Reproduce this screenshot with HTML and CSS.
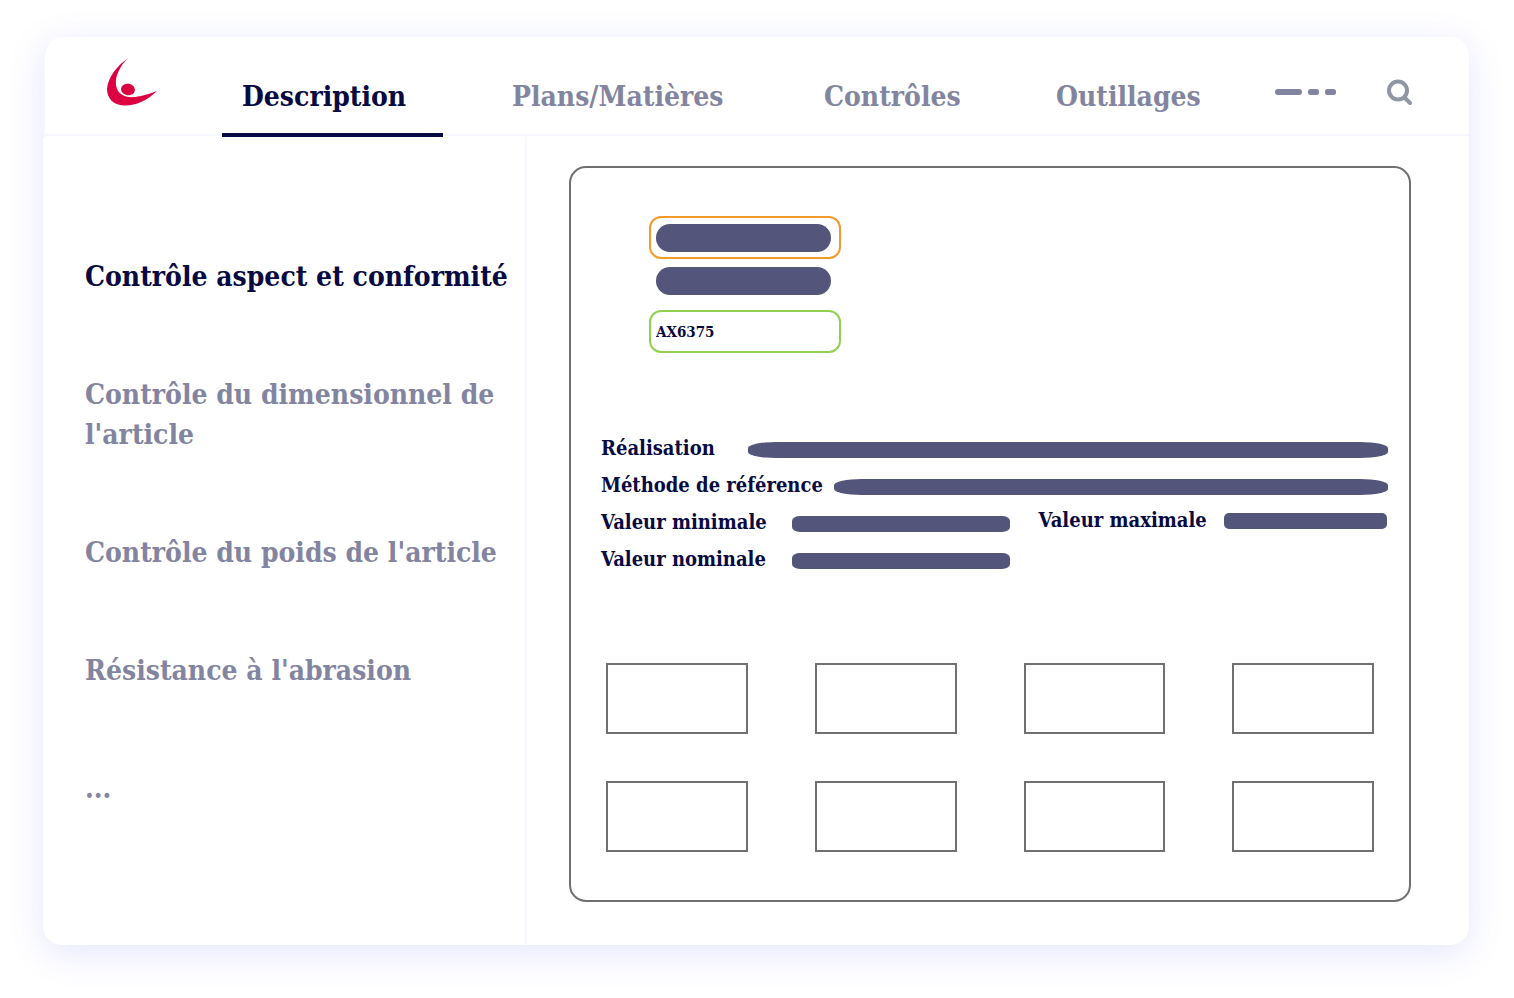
FILE: index.html
```html
<!DOCTYPE html>
<html lang="fr">
<head>
<meta charset="utf-8">
<meta name="viewport" content="width=device-width, initial-scale=1">
<title>Description</title>
<link rel="stylesheet" href="styles.css">
</head>
<body>
<div class="frame">
  <header class="header">
    <a class="logo" href="#" aria-label="Accueil">
      <svg width="52" height="50" viewBox="0 0 52 50" aria-hidden="true">
        <path fill="#dc0041" d="M22 1C14 9 9 19 10 28C11 37 19 41 29 40C37 39 45 36 51 34C41 44 29 49 18 48.500C7 48 1 41 1 32C2 20 11 9 22 1Z"/>
        <ellipse cx="22" cy="32.500" rx="7" ry="5.700" fill="#dc0041" transform="rotate(8 22 32.500)"/>
      </svg>
    </a>
    <a class="tab tab-active" href="#" aria-current="page">Description</a>
    <a class="tab" href="#">Plans/Matières</a>
    <a class="tab" href="#">Contrôles</a>
    <a class="tab" href="#">Outillages</a>
    <div class="tools">
      <button class="icon-button" type="button" aria-label="Plus d'onglets">
        <svg width="61" height="6" viewBox="0 0 61 6" fill="#8385a0" aria-hidden="true">
          <rect width="27" height="6" rx="3"/><rect x="33" width="11" height="6" rx="2.500"/><rect x="50" width="11" height="6" rx="2.500"/>
        </svg>
      </button>
      <button class="icon-button" type="button" aria-label="Rechercher">
        <svg width="28" height="28" viewBox="0 0 28 28" fill="none" stroke="#9096a3" aria-hidden="true">
          <circle cx="13" cy="12.500" r="9" stroke-width="4"/><path d="M19.500 19.500L25 25" stroke-width="4" stroke-linecap="round"/>
        </svg>
      </button>
    </div>
  </header>
  <div class="body">
    <nav class="sidebar" aria-label="Contrôles">
      <a class="item item-active" href="#">Contrôle aspect et conformité</a>
      <a class="item" href="#">Contrôle du dimensionnel de l'article</a>
      <a class="item" href="#">Contrôle du poids de l'article</a>
      <a class="item" href="#">Résistance à l'abrasion</a>
      <a class="item" href="#">...</a>
    </nav>
    <main class="content">
      <section class="panel">
        <div class="references">
          <div class="field field-warning"><div class="pill"></div></div>
          <div class="pill pill-plain"></div>
          <input class="field field-valid" type="text" value="AX6375" aria-label="Référence">
        </div>
        <div class="details">
          <div class="row row-short"><span>Réalisation</span><div class="bar bar-long"></div></div>
          <div class="row row-long"><span>Méthode de référence</span><div class="bar bar-long"></div></div>
          <div class="row row-values"><span>Valeur minimale</span><div class="bar"></div><span class="label-max">Valeur maximale</span><div class="bar bar-max"></div></div>
          <div class="row row-values"><span>Valeur nominale</span><div class="bar"></div></div>
        </div>
        <div class="boxes">
          <div class="box"></div><div class="box"></div><div class="box"></div><div class="box"></div>
          <div class="box"></div><div class="box"></div><div class="box"></div><div class="box"></div>
        </div>
      </section>
    </main>
  </div>
</div>
</body>
</html>
```
FILE: styles.css
```css
* { box-sizing: border-box; }

body {
  margin: 0;
  padding: 37px 45px 53px 43px;
  min-height: 100vh;
  display: flex;
  background: #fff;
  color: #080a41;
  font-family: "Roboto Slab", "DejaVu Serif Condensed", "DejaVu Serif", serif;
  font-weight: 700;
}

a { color: inherit; text-decoration: none; }

.frame {
  flex: 1;
  display: flex;
  flex-direction: column;
  background: #fff;
  border-radius: 19px;
  box-shadow: 0 8px 36px rgba(90, 100, 245, 0.16);
}

.header {
  display: grid;
  grid-template-columns: 177fr 270fr 312fr 232fr 239fr 194fr;
  height: 100px;
  border-left: 2px solid #f5f5ff;
  border-top-left-radius: 19px;
  box-shadow: inset 0 -1px #fff, inset 0 -3px #f6f6ff;
}

.logo { padding: 20px 0 0 61px; }

.tab {
  justify-self: start;
  padding: 40px 0 0 20px;
  border-bottom: 4px solid transparent;
  color: #8385a0;
  font-size: 28px;
  line-height: 40px;
  white-space: nowrap;
}

.tab-active {
  min-width: 221px;
  border-bottom-color: #080a41;
  color: #080a41;
}

.tools {
  display: flex;
  justify-content: space-between;
  align-items: center;
  padding: 9px 56px 0 0;
}

.icon-button {
  display: flex;
  padding: 0;
  border: 0;
  background: none;
  cursor: pointer;
}

.body {
  flex: 1;
  display: grid;
  grid-template-columns: 484fr 942fr;
}

.sidebar {
  display: flex;
  flex-direction: column;
  gap: 78px;
  padding: 120px 16px 0 42px;
  border-right: 2px solid #f7f7ff;
  font-size: 28px;
  line-height: 40px;
}

.item { color: #8385a0; }
.item-active { color: #080a41; white-space: nowrap; }

.content { display: flex; padding: 29px 58px 43px 42px; }

.panel {
  flex: 1;
  padding: 48px 21px 47px 30px;
  border: 2px solid #707070;
  border-radius: 17px;
}

.references { width: 240px; padding-left: 48px; }

.field {
  display: block;
  width: 100%;
  height: 43px;
  padding: 6px 8px 6px 5px;
  border: 2px solid;
  border-radius: 12px;
}

.field-warning { border-color: #f39a2b; }

.field-valid {
  border-color: #92d050;
  background: none;
  color: inherit;
  font: inherit;
  font-size: 15px;
}

.pill { height: 28px; border-radius: 14px; background: #53557a; }
.pill-plain { margin: 8px 10px 15px 7px; }

.details { margin-top: 76px; font-size: 20px; line-height: 32px; }

.row { display: grid; align-items: center; height: 37px; white-space: nowrap; }
.row-short { grid-template-columns: 147px 1fr; }
.row-long { grid-template-columns: 233px 1fr; }
.row-values { grid-template-columns: 191px 217fr 214px 164fr; }

.label-max { padding-left: 29px; margin-bottom: 4px; }

.bar {
  height: 16px;
  margin-top: 4px;
  border-radius: 8px / 5px;
  background: #53557a;
}

.bar-long { border-radius: 28px / 6px; }
.bar-max { margin: 0 1px 2px 0; border-radius: 5px; }

.boxes {
  display: grid;
  grid-template-columns: repeat(4, 1fr);
  gap: 47px 67px;
  margin-top: 86px;
  padding: 0 14px 0 5px;
}

.box { height: 71px; border: 2px solid #707070; }
```
